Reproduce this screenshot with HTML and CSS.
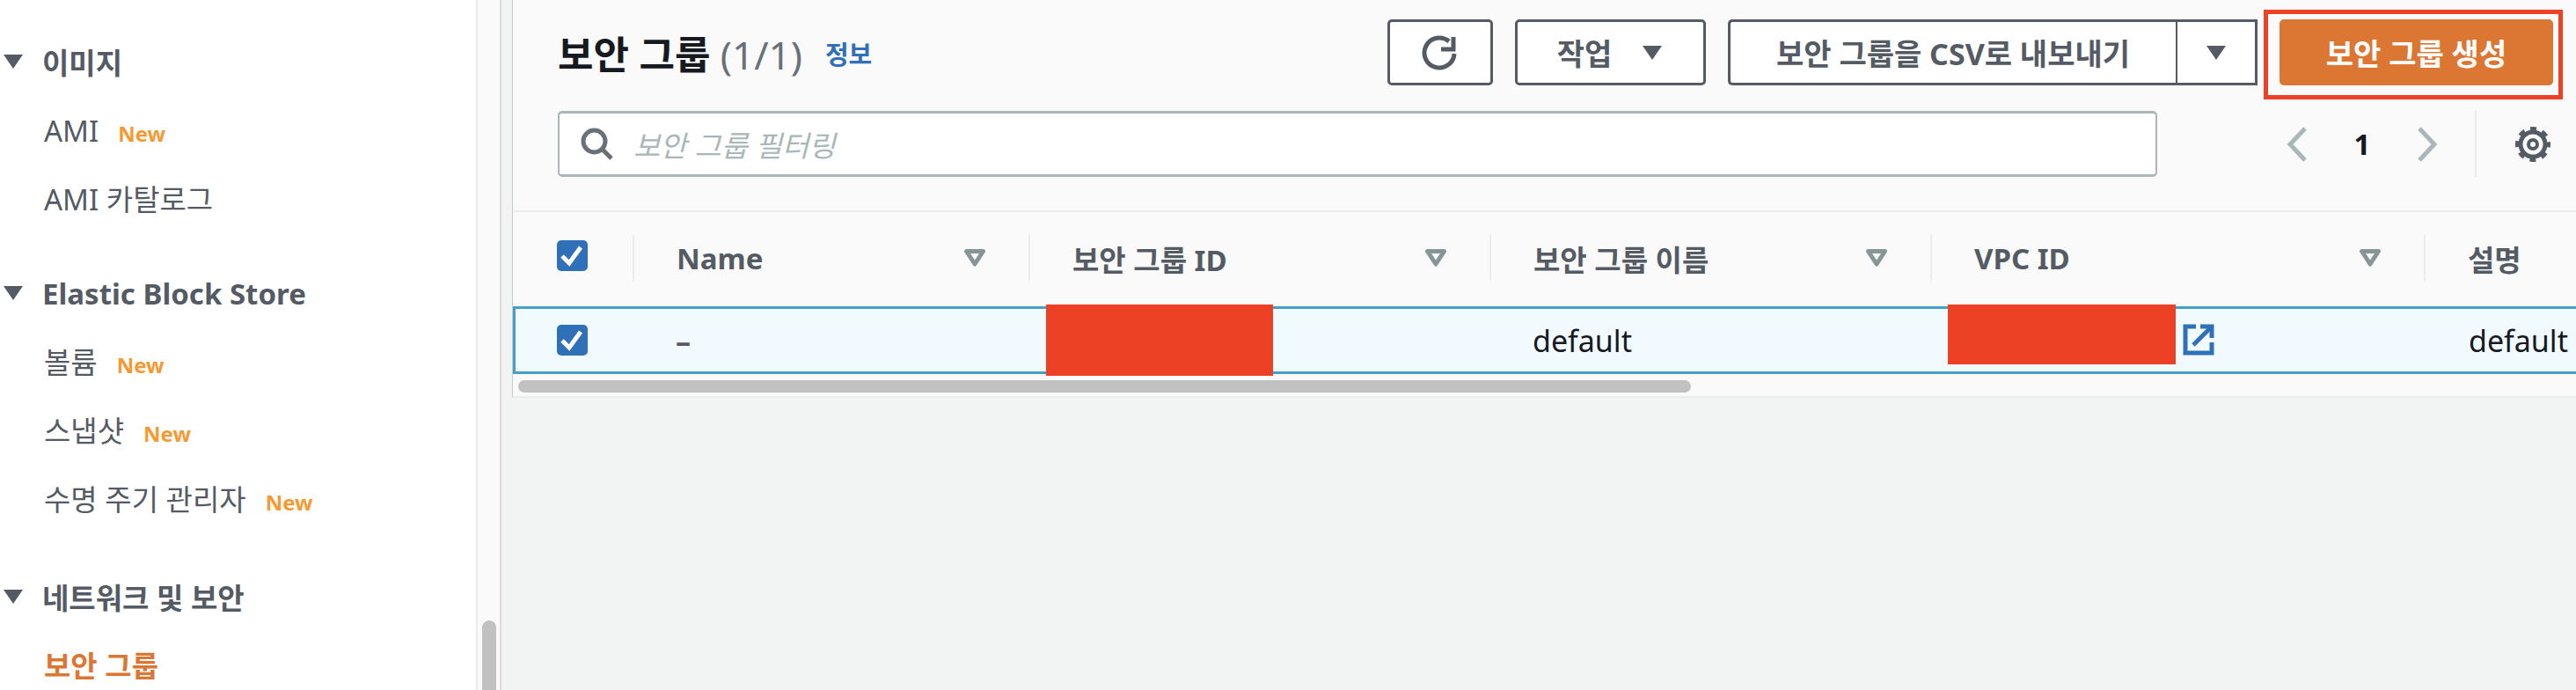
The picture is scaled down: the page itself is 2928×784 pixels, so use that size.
FILE: index.html
```html
<!DOCTYPE html>
<html lang="ko">
<head>
    <meta charset="utf-8">
    <title>보안 그룹</title>
    <link rel="stylesheet" href="styles.css">
</head>
<body>
    <nav class="sidebar">
        <div class="nav-group">
            <div class="nav-title"><svg class="caret" viewBox="0 0 26 20"><path d="M2 2h22L13 18z"/></svg>이미지</div>
            <div class="nav-item">AMI<span class="new">New</span></div>
            <div class="nav-item">AMI 카탈로그</div>
        </div>
        <div class="nav-group">
            <div class="nav-title"><svg class="caret" viewBox="0 0 26 20"><path d="M2 2h22L13 18z"/></svg>Elastic Block Store</div>
            <div class="nav-item">볼륨<span class="new">New</span></div>
            <div class="nav-item">스냅샷<span class="new">New</span></div>
            <div class="nav-item">수명 주기 관리자<span class="new">New</span></div>
        </div>
        <div class="nav-group">
            <div class="nav-title"><svg class="caret" viewBox="0 0 26 20"><path d="M2 2h22L13 18z"/></svg>네트워크 및 보안</div>
            <div class="nav-item active">보안 그룹</div>
        </div>
    </nav>
    <div class="side-track"><div class="side-thumb"></div></div>

    <main class="content">
        <section class="panel">
            <div class="panel-head">
                <div class="title-row">
                    <h1>보안 그룹 <span class="count">(1/1)</span></h1>
                    <a class="info">정보</a>
                    <div class="actions">
                        <button class="btn btn-icon">
                            <svg width="42" height="42" viewBox="0 0 42 42" fill="none" stroke="#545b64" stroke-width="5"><path d="M37 22a17 17 0 1 1-6-14"/><path d="M36 3v14H22"/></svg>
                        </button>
                        <button class="btn btn-menu">작업<svg class="btn-caret" viewBox="0 0 26 20"><path d="M2 2h22L13 18z"/></svg></button>
                        <div class="split">
                            <button class="btn split-main">보안 그룹을 CSV로 내보내기</button>
                            <button class="btn split-arrow"><svg class="btn-caret" viewBox="0 0 26 20"><path d="M2 2h22L13 18z"/></svg></button>
                        </div>
                        <button class="btn btn-primary">보안 그룹 생성</button>
                    </div>
                </div>
                <div class="filter-row">
                    <div class="search">
                        <svg width="38" height="38" viewBox="0 0 38 38" fill="none" stroke="#687078" stroke-width="5"><circle cx="15.500" cy="15.500" r="12.500"/><path d="M24 24l11 11"/></svg>
                        <span class="placeholder">보안 그룹 필터링</span>
                    </div>
                    <div class="pager">
                        <svg width="24" height="40" viewBox="0 0 24 40" fill="none" stroke="#aab7b8" stroke-width="5"><path d="M21 2L4 20l17 18"/></svg>
                        <span class="page-num">1</span>
                        <svg width="24" height="40" viewBox="0 0 24 40" fill="none" stroke="#aab7b8" stroke-width="5"><path d="M3 2l17 18L3 38"/></svg>
                    </div>
                    <div class="prefs">
                        <svg width="40" height="40" viewBox="0 0 40 40" fill="none" stroke="#545b64"><circle cx="20" cy="20" r="5" stroke-width="4"/><circle cx="20" cy="20" r="14" stroke-width="5"/><circle cx="20" cy="20" r="17.500" stroke-width="5" stroke-dasharray="6.900 6.840" stroke-dashoffset="3.450"/></svg>
                    </div>
                </div>
            </div>

            <div class="table-wrap">
                <div class="table-row table-header">
                    <div class="cell cell-check"><span class="checkbox"><svg viewBox="0 0 35 35" fill="none" stroke="#fff" stroke-width="5"><path d="M6 18l8 8L27 8"/></svg></span></div>
                    <div class="cell th">Name<svg class="sort" viewBox="0 0 26 20"><path d="M3.500 2.500h19L13 17z" fill="none" stroke="#879596" stroke-width="5" stroke-linejoin="round"/></svg></div>
                    <div class="cell th">보안 그룹 ID<svg class="sort" viewBox="0 0 26 20"><path d="M3.500 2.500h19L13 17z" fill="none" stroke="#879596" stroke-width="5" stroke-linejoin="round"/></svg></div>
                    <div class="cell th">보안 그룹 이름<svg class="sort" viewBox="0 0 26 20"><path d="M3.500 2.500h19L13 17z" fill="none" stroke="#879596" stroke-width="5" stroke-linejoin="round"/></svg></div>
                    <div class="cell th">VPC ID<svg class="sort" viewBox="0 0 26 20"><path d="M3.500 2.500h19L13 17z" fill="none" stroke="#879596" stroke-width="5" stroke-linejoin="round"/></svg></div>
                    <div class="cell th">설명</div>
                </div>
                <div class="table-row table-body">
                    <div class="cell cell-check"><span class="checkbox"><svg viewBox="0 0 35 35" fill="none" stroke="#fff" stroke-width="5"><path d="M6 18l8 8L27 8"/></svg></span></div>
                    <div class="cell td td-dash">–</div>
                    <div class="cell td"><span class="redact redact-id"></span></div>
                    <div class="cell td">default</div>
                    <div class="cell td"><span class="redact redact-vpc"></span>
                        <svg class="ext" width="36" height="36" viewBox="0 0 36 36" fill="none" stroke="#2f70b8" stroke-width="5"><path d="M15 3H3v30h30V21"/><path d="M12 24L31 5"/><path d="M20 3h13v13"/></svg>
                    </div>
                    <div class="cell td td-last">default</div>
                </div>
                <div class="table-scroll"><div class="table-thumb"></div></div>
            </div>
        </section>
    </main>
</body>
</html>
```

FILE: styles.css
```css
* {
    box-sizing: border-box;
}

html, body {
    height: 100%;
}

body {
    display: flex;
    margin: 0;
    overflow: hidden;
    font-family: "Noto Sans", "Noto Sans CJK KR", sans-serif;
    color: #16191f;
    background-color: #f2f3f3;
}

.sidebar {
    width: 541px;
    padding-top: 48px;
    background-color: #fff;
    color: #545b64;
}

.nav-group {
    margin-bottom: 45px;
}

.nav-group:nth-child(2) {
    margin-bottom: 49px;
}

.nav-title {
    display: flex;
    align-items: center;
    height: 44px;
    font-size: 33px;
    font-weight: 700;
}

.caret {
    width: 26px;
    height: 20px;
    margin: 0 20px 0 2px;
    fill: #545b64;
}

.nav-item {
    display: flex;
    align-items: center;
    height: 78px;
    padding-left: 50px;
    font-size: 33px;
    line-height: 78px;
}

.nav-title + .nav-item {
    margin-top: 18px;
}

.new {
    margin-left: 22px;
    padding-top: 6px;
    font-size: 24px;
    font-weight: 700;
    color: #f59a32;
}

.nav-item.active {
    font-weight: 700;
    color: #dc7733;
}

.side-track {
    position: relative;
    width: 29px;
    background-color: #fafafa;
    border-left: 2px solid #ececec;
    border-right: 2px solid #dcdcdc;
}

.side-thumb {
    position: absolute;
    top: 705px;
    left: 5px;
    width: 16px;
    height: 100px;
    border-radius: 8px;
    background-color: #c1c1c1;
}

.content {
    flex: 1;
    min-width: 0;
    padding-left: 12px;
}

.panel {
    height: 452px;
    background-color: #fafafa;
    border-left: 1px solid #c4cccc;
    border-bottom: 2px solid #eaeded;
}

.panel-head {
    height: 241px;
    padding: 22px 26px 0 51px;
    border-bottom: 2px solid #eaeded;
}

.title-row {
    display: flex;
    align-items: center;
    height: 75px;
}

h1 {
    margin: 0;
    font-size: 44px;
    font-weight: 700;
    white-space: nowrap;
}

.count {
    font-weight: 400;
    color: #687078;
}

.info {
    margin-left: 26px;
    font-size: 29px;
    font-weight: 700;
    color: #2f70b8;
}

.actions {
    display: flex;
    margin-left: auto;
    gap: 25px;
}

.btn {
    display: flex;
    align-items: center;
    justify-content: center;
    height: 75px;
    padding: 0;
    font-family: inherit;
    font-size: 34px;
    font-weight: 700;
    color: #545b64;
    background-color: #fff;
    border: 3px solid #545b64;
    border-radius: 5px;
}

.btn-icon {
    width: 120px;
}

.btn-menu {
    width: 217px;
}

.btn-caret {
    width: 26px;
    height: 20px;
    margin-left: 33px;
    fill: #545b64;
}

.split {
    display: flex;
    margin-right: -18px;
}

.split-main {
    width: 509px;
    border-right: 0;
    border-radius: 5px 0 0 5px;
}

.split-arrow {
    width: 93px;
    border-left-width: 2px;
    border-radius: 0;
}

.split-arrow .btn-caret {
    margin-left: 0;
}

.btn-primary {
    position: relative;
    width: 311px;
    margin-left: 18px;
    color: #fff;
    background-color: #dc7733;
    border-color: #dc7733;
}

/* red marker drawn on the shot around the button */
.btn-primary::after {
    content: "";
    position: absolute;
    top: -14px;
    right: -14px;
    bottom: -19px;
    left: -21px;
    border: 5px solid #ec4125;
}

.filter-row {
    display: flex;
    align-items: center;
    height: 75px;
    margin-top: 29px;
}

.search {
    display: flex;
    align-items: center;
    width: 1818px;
    height: 75px;
    padding-left: 24px;
    background-color: #fff;
    border: 2px solid #aab7b8;
    border-top-width: 3px;
    border-bottom-width: 3px;
    border-radius: 5px;
}

.placeholder {
    margin-left: 22px;
    font-size: 33px;
    font-style: italic;
    color: #aab7b8;
}

.pager {
    display: flex;
    align-items: center;
    width: 361px;
    padding-left: 147px;
}

.page-num {
    width: 124px;
    font-size: 33px;
    font-weight: 700;
    text-align: center;
}

.prefs {
    display: flex;
    align-items: center;
    height: 75px;
    padding-left: 44px;
    border-left: 2px solid #eaeded;
}

.table-wrap {
    overflow: hidden;
}

.table-row {
    display: grid;
    grid-template-columns: 136px 450px 524px 501px 561px 175px;
}

.table-header {
    height: 105px;
}

.table-body {
    position: relative;
    height: 77px;
    margin-top: 2px;
    background-color: #f1faff;
    border: 3px solid #44a0c8;
    border-right: 0;
}

.cell {
    display: flex;
    align-items: center;
    min-width: 0;
    padding-left: 50px;
    font-size: 34px;
    white-space: nowrap;
}

.cell-check {
    padding-left: 50px;
}

.table-header .cell-check {
    align-items: flex-start;
    padding-top: 32px;
}

.table-body .cell-check {
    padding-left: 47px;
}

.td {
    padding-left: 46px;
}

.td-last {
    padding-left: 48px;
}

.checkbox {
    display: block;
    width: 35px;
    height: 35px;
    background-color: #2f70b8;
    border-radius: 5px;
}

.checkbox svg {
    display: block;
}

.th {
    position: relative;
    font-size: 33px;
    font-weight: 700;
    color: #545b64;
}

.th::before {
    content: "";
    position: absolute;
    top: 26px;
    left: 0;
    width: 2px;
    height: 52px;
    background-color: #eaeded;
}

.sort {
    position: absolute;
    top: 42px;
    right: 48px;
    width: 26px;
    height: 20px;
}

.td-dash {
    font-weight: 700;
    color: #545b64;
}

.redact {
    position: absolute;
    top: -5px;
    background-color: #ec4125;
}

.redact-id {
    left: 603px;
    width: 258px;
    height: 81px;
}

.redact-vpc {
    left: 1628px;
    width: 259px;
    height: 68px;
}

.ext {
    position: absolute;
    top: 17px;
    left: 1895px;
}

.table-scroll {
    height: 21px;
    padding: 7px 0 0 6px;
}

.table-thumb {
    width: 1333px;
    height: 14px;
    border-radius: 7px;
    background-color: #c1c1c1;
}
```
